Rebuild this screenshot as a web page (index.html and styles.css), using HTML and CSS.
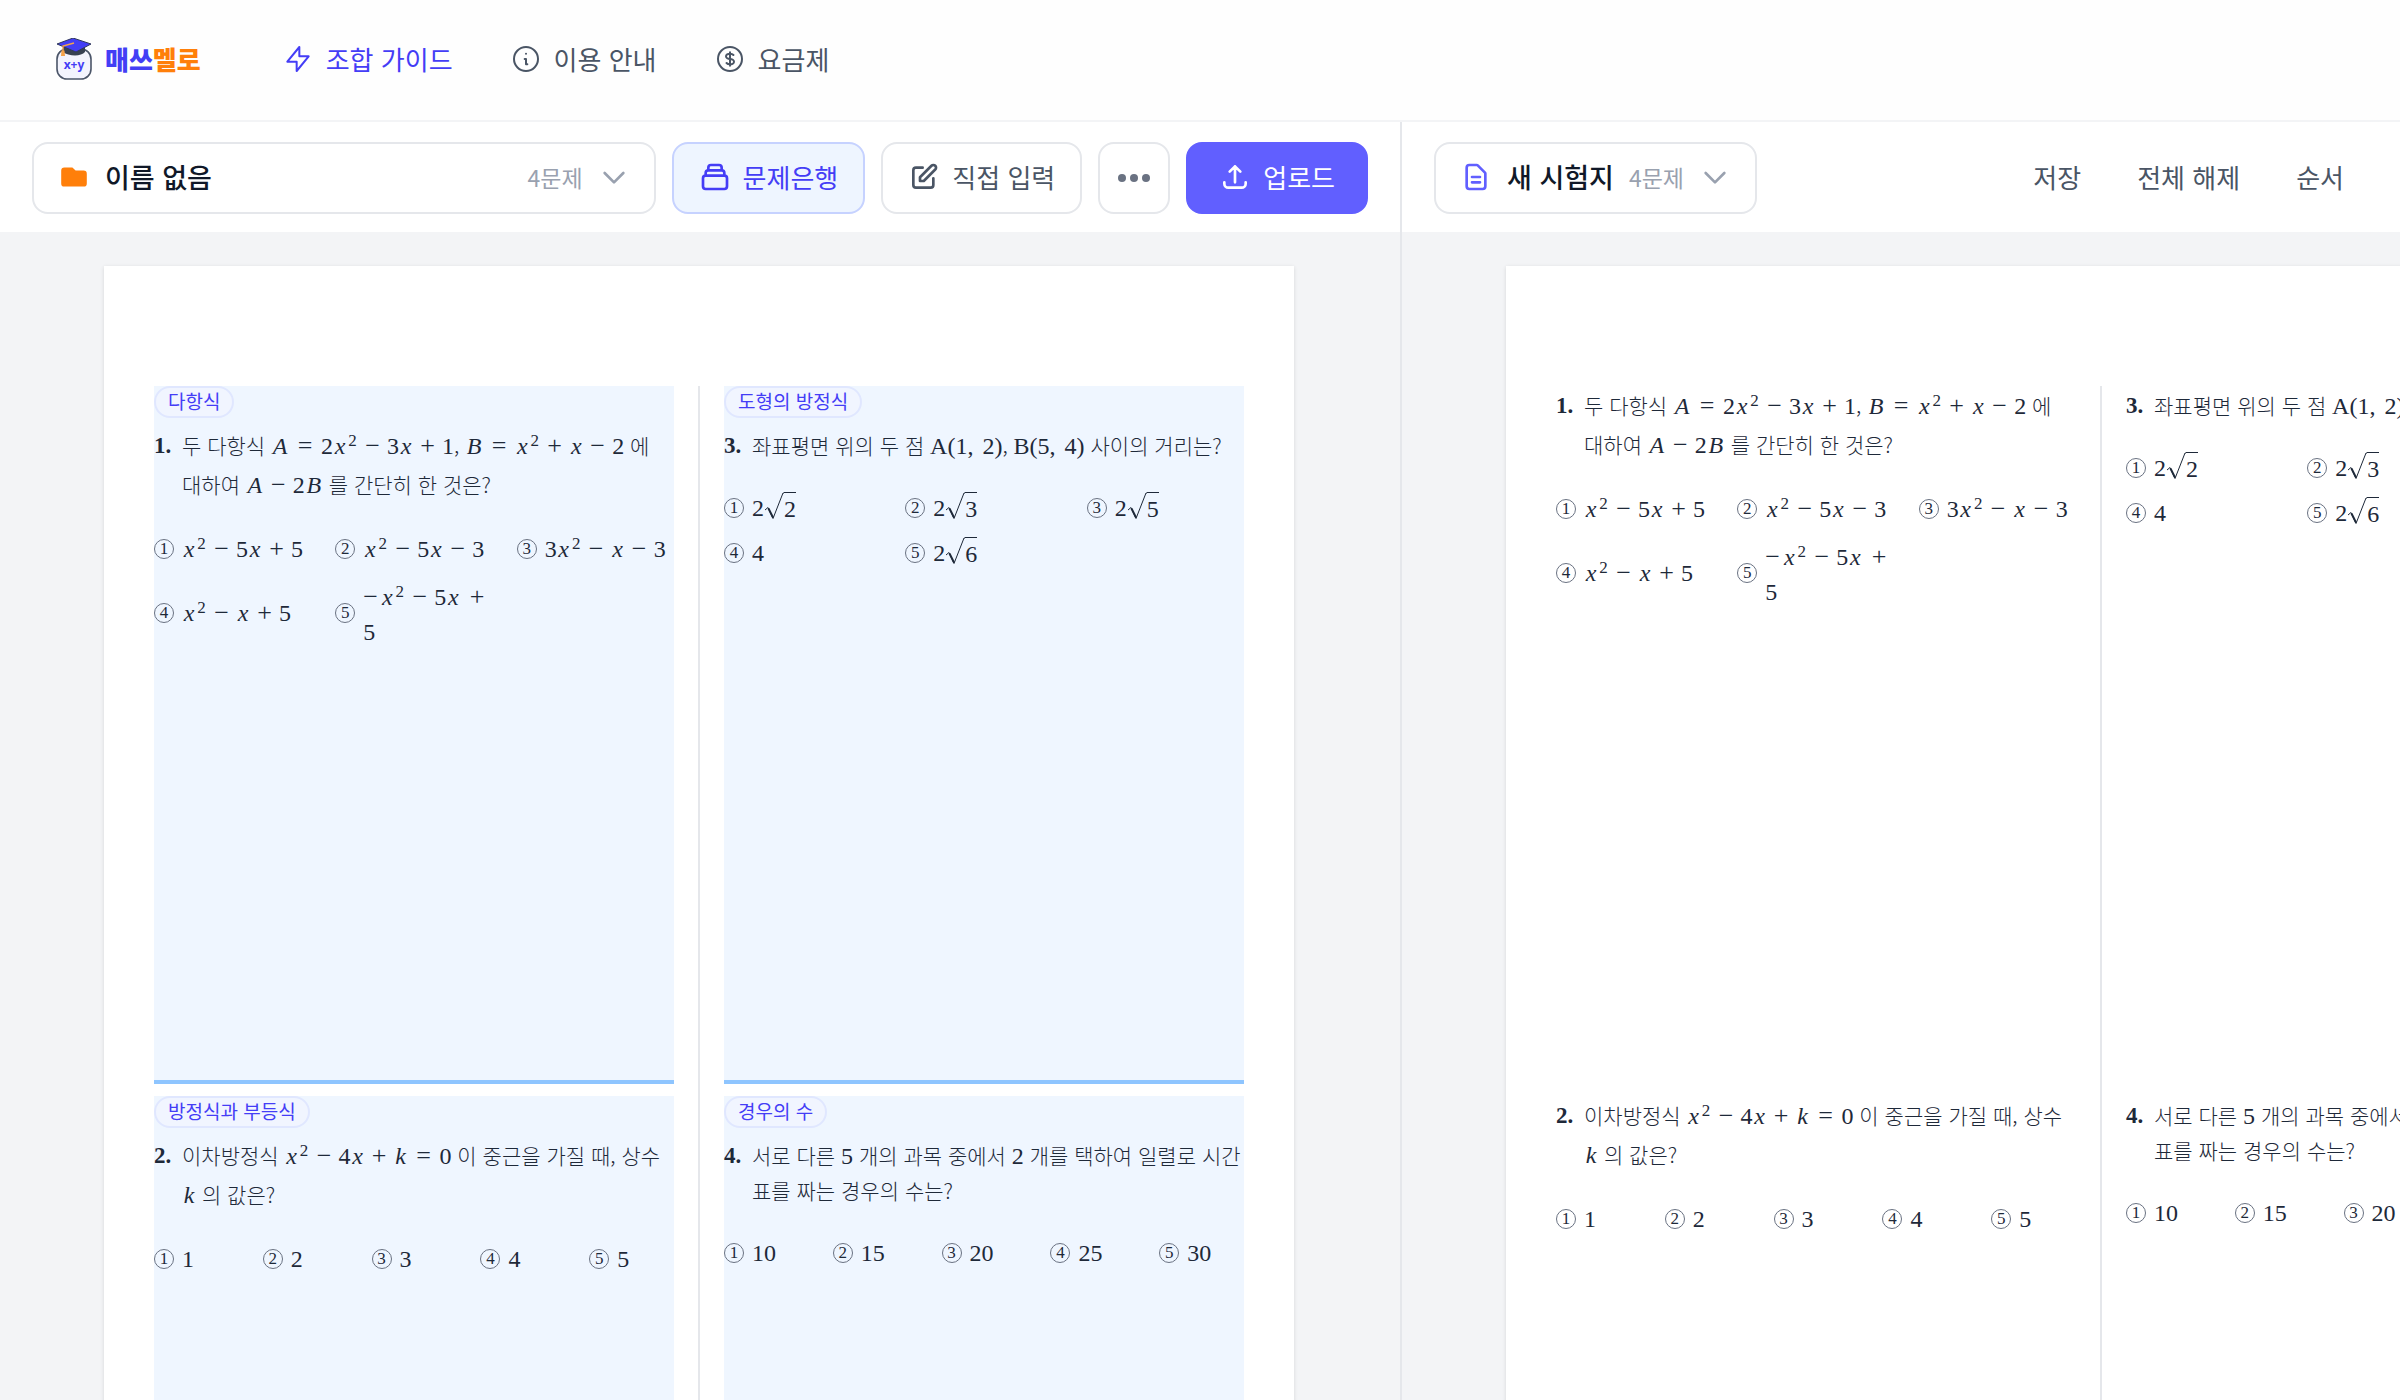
FILE: index.html
```html
<!DOCTYPE html>
<html lang="ko">
<head>
<meta charset="utf-8">
<title>매쓰멜로</title>
<link rel="stylesheet" href="styles.css">
</head>
<body>
<header class="site-header">
  <a class="brand" href="#">
    <svg class="brand-mark" viewBox="0 0 36 42" aria-hidden="true">
      <rect x="1" y="11" width="34" height="30" rx="10" fill="#f3f4fd" stroke="#4b5568" stroke-width="1.6"/>
      <path d="M7 8v6c5 4 18 5 22 0V8z" fill="#374151"/>
      <path d="M1 6 17 0l18 6-15 8z" fill="#433ef5" stroke="#30395c" stroke-width="1"/>
      <path d="m18 5-11 3v5" fill="none" stroke="#f5a34a" stroke-width="1.4"/>
      <path d="M5.500 12.500h3l.5 5.500h-4z" fill="#f5a34a"/>
      <text class="brand-formula" x="18" y="31" text-anchor="middle">x+y</text>
    </svg>
    <span class="brand-name">매쓰<span class="brand-accent">멜로</span></span>
  </a>
  <nav class="site-nav">
    <a class="nav-link nav-link--active" href="#">
      <svg class="icon icon--light" viewBox="0 0 24 24" aria-hidden="true"><path d="M13 10V3L4 14h7v7l9-11h-7z"/></svg>
      조합 가이드
    </a>
    <a class="nav-link" href="#">
      <svg class="icon icon--light" viewBox="0 0 24 24" aria-hidden="true"><path d="M13 16h-1v-4h-1m1-4h.01M21 12a9 9 0 11-18 0 9 9 0 0118 0z"/></svg>
      이용 안내
    </a>
    <a class="nav-link" href="#">
      <svg class="icon icon--light" viewBox="0 0 24 24" aria-hidden="true"><path d="M12 8c-1.657 0-3 .895-3 2s1.343 2 3 2 3 .895 3 2-1.343 2-3 2m0-8c1.110 0 2.080.402 2.599 1M12 8V7m0 1v8m0 0v1m0-1c-1.110 0-2.080-.402-2.599-1M21 12a9 9 0 11-18 0 9 9 0 0118 0z"/></svg>
      요금제
    </a>
  </nav>
</header>

<main class="workspace">
  <section class="pane">
    <div class="toolbar">
      <button class="btn picker picker--wide" type="button">
        <svg class="icon icon--folder" viewBox="0 0 20 20" aria-hidden="true"><path d="M2 6a2 2 0 012-2h5l2 2h5a2 2 0 012 2v6a2 2 0 01-2 2H4a2 2 0 01-2-2V6z"/></svg>
        <span class="picker-name">이름 없음</span>
        <span class="picker-count">4문제</span>
        <svg class="icon icon--chevron" viewBox="0 0 24 24" aria-hidden="true"><path d="M19 9l-7 7-7-7"/></svg>
      </button>
      <button class="btn btn--selected" type="button">
        <svg class="icon" viewBox="0 0 24 24" aria-hidden="true"><path d="M19 11H5m14 0a2 2 0 012 2v6a2 2 0 01-2 2H5a2 2 0 01-2-2v-6a2 2 0 012-2m14 0V9a2 2 0 00-2-2M5 11V9a2 2 0 012-2m0 0V5a2 2 0 012-2h6a2 2 0 012 2v2M7 7h10"/></svg>
        문제은행
      </button>
      <button class="btn" type="button">
        <svg class="icon" viewBox="0 0 24 24" aria-hidden="true"><path d="M11 5H6a2 2 0 00-2 2v11a2 2 0 002 2h11a2 2 0 002-2v-5m-1.414-9.414a2 2 0 112.828 2.828L11.828 15H9v-2.828l8.586-8.586z"/></svg>
        직접 입력
      </button>
      <button class="btn btn--more" type="button" aria-label="더보기">
        <svg class="dots" viewBox="0 0 32 8" aria-hidden="true"><circle cx="4" cy="4" r="4"/><circle cx="16" cy="4" r="4"/><circle cx="28" cy="4" r="4"/></svg>
      </button>
      <button class="btn btn--primary" type="button">
        <svg class="icon" viewBox="0 0 24 24" aria-hidden="true"><path d="M4 16v1a3 3 0 003 3h10a3 3 0 003-3v-1m-4-8l-4-4m0 0L8 8m4-4v12"/></svg>
        업로드
      </button>
    </div>
    <div class="desk">
      <div class="paper paper--bank">
        <div class="column">
          <article class="cell">
            <span class="tag">다항식</span>
            <div class="question question--formula"><b class="number">1.</b><p class="stem">두 다항식 <span class="math"><var class="cap">A</var><span class="rel">=</span>2<var>x</var><sup>2</sup><span class="bin">−</span>3<var>x</var><span class="bin">+</span>1</span>, <span class="math"><var class="cap">B</var><span class="rel">=</span><var>x</var><sup>2</sup><span class="bin">+</span><var>x</var><span class="bin">−</span>2</span> 에 대하여 <span class="math"><var class="cap">A</var><span class="bin">−</span>2<var class="cap">B</var></span> 를 간단히 한 것은?</p></div>
            <ol class="choices">
              <li><i class="mark">1</i><span class="math"><var>x</var><sup>2</sup><span class="bin">−</span>5<var>x</var><span class="bin">+</span>5</span></li>
              <li><i class="mark">2</i><span class="math"><var>x</var><sup>2</sup><span class="bin">−</span>5<var>x</var><span class="bin">−</span>3</span></li>
              <li><i class="mark">3</i><span class="math">3<var>x</var><sup>2</sup><span class="bin">−</span><var>x</var><span class="bin">−</span>3</span></li>
              <li><i class="mark">4</i><span class="math"><var>x</var><sup>2</sup><span class="bin">−</span><var>x</var><span class="bin">+</span>5</span></li>
              <li><i class="mark">5</i><span><span class="math"><span class="sign">−</span><var>x</var><sup>2</sup><span class="bin">−</span>5<var>x</var><span class="bin bin--end">+</span></span> <span class="math">5</span></span></li>
            </ol>
          </article>
          <article class="cell">
            <span class="tag">방정식과 부등식</span>
            <div class="question question--formula"><b class="number">2.</b><p class="stem">이차방정식 <span class="math"><var>x</var><sup>2</sup><span class="bin">−</span>4<var>x</var><span class="bin">+</span><var>k</var><span class="rel">=</span>0</span> 이 중근을 가질 때, 상수 <span class="math"><var>k</var></span> 의 값은?</p></div>
            <ol class="choices choices--five">
              <li><i class="mark">1</i><span class="math">1</span></li>
              <li><i class="mark">2</i><span class="math">2</span></li>
              <li><i class="mark">3</i><span class="math">3</span></li>
              <li><i class="mark">4</i><span class="math">4</span></li>
              <li><i class="mark">5</i><span class="math">5</span></li>
            </ol>
          </article>
        </div>
        <div class="rule"></div>
        <div class="column">
          <article class="cell">
            <span class="tag">도형의 방정식</span>
            <div class="question"><b class="number">3.</b><p class="stem">좌표평면 위의 두 점 <span class="math"><span class="point">A</span>(1,<span class="comma-gap"></span>2)</span>, <span class="math"><span class="point">B</span>(5,<span class="comma-gap"></span>4)</span> 사이의 거리는?</p></div>
            <ol class="choices">
              <li><i class="mark">1</i><span class="math">2<svg class="radical" viewBox="0 0 20 28" aria-hidden="true"><path d="m1 18 3-2.500 5 11L19 1h1"/><path class="radical-heavy" d="m4.500 16.500 4.500 9"/></svg><span class="radicand">2</span></span></li>
              <li><i class="mark">2</i><span class="math">2<svg class="radical" viewBox="0 0 20 28" aria-hidden="true"><path d="m1 18 3-2.500 5 11L19 1h1"/><path class="radical-heavy" d="m4.500 16.500 4.500 9"/></svg><span class="radicand">3</span></span></li>
              <li><i class="mark">3</i><span class="math">2<svg class="radical" viewBox="0 0 20 28" aria-hidden="true"><path d="m1 18 3-2.500 5 11L19 1h1"/><path class="radical-heavy" d="m4.500 16.500 4.500 9"/></svg><span class="radicand">5</span></span></li>
              <li><i class="mark">4</i><span class="math">4</span></li>
              <li><i class="mark">5</i><span class="math">2<svg class="radical" viewBox="0 0 20 28" aria-hidden="true"><path d="m1 18 3-2.500 5 11L19 1h1"/><path class="radical-heavy" d="m4.500 16.500 4.500 9"/></svg><span class="radicand">6</span></span></li>
            </ol>
          </article>
          <article class="cell">
            <span class="tag">경우의 수</span>
            <div class="question"><b class="number">4.</b><p class="stem">서로 다른 <span class="math">5</span> 개의 과목 중에서 <span class="math">2</span> 개를 택하여 일렬로 시간표를 짜는 경우의 수는?</p></div>
            <ol class="choices choices--five">
              <li><i class="mark">1</i><span class="math">10</span></li>
              <li><i class="mark">2</i><span class="math">15</span></li>
              <li><i class="mark">3</i><span class="math">20</span></li>
              <li><i class="mark">4</i><span class="math">25</span></li>
              <li><i class="mark">5</i><span class="math">30</span></li>
            </ol>
          </article>
        </div>
      </div>
    </div>
  </section>

  <section class="pane pane--exam">
    <div class="toolbar">
      <button class="btn picker" type="button">
        <svg class="icon icon--doc" viewBox="0 0 24 24" aria-hidden="true"><path d="M9 12h6m-6 4h6m2 5H7a2 2 0 01-2-2V5a2 2 0 012-2h5.586a1 1 0 01.707.293l5.414 5.414a1 1 0 01.293.707V19a2 2 0 01-2 2z"/></svg>
        <span class="picker-name">새 시험지</span>
        <span class="picker-count">4문제</span>
        <svg class="icon icon--chevron" viewBox="0 0 24 24" aria-hidden="true"><path d="M19 9l-7 7-7-7"/></svg>
      </button>
      <div class="actions">
        <button class="btn btn--text" type="button">저장</button>
        <button class="btn btn--text" type="button">전체 해제</button>
        <button class="btn btn--text" type="button">순서</button>
      </div>
    </div>
    <div class="desk">
      <div class="paper">
        <div class="column">
          <article class="cell">
            <div class="question question--formula"><b class="number">1.</b><p class="stem">두 다항식 <span class="math"><var class="cap">A</var><span class="rel">=</span>2<var>x</var><sup>2</sup><span class="bin">−</span>3<var>x</var><span class="bin">+</span>1</span>, <span class="math"><var class="cap">B</var><span class="rel">=</span><var>x</var><sup>2</sup><span class="bin">+</span><var>x</var><span class="bin">−</span>2</span> 에 대하여 <span class="math"><var class="cap">A</var><span class="bin">−</span>2<var class="cap">B</var></span> 를 간단히 한 것은?</p></div>
            <ol class="choices">
              <li><i class="mark">1</i><span class="math"><var>x</var><sup>2</sup><span class="bin">−</span>5<var>x</var><span class="bin">+</span>5</span></li>
              <li><i class="mark">2</i><span class="math"><var>x</var><sup>2</sup><span class="bin">−</span>5<var>x</var><span class="bin">−</span>3</span></li>
              <li><i class="mark">3</i><span class="math">3<var>x</var><sup>2</sup><span class="bin">−</span><var>x</var><span class="bin">−</span>3</span></li>
              <li><i class="mark">4</i><span class="math"><var>x</var><sup>2</sup><span class="bin">−</span><var>x</var><span class="bin">+</span>5</span></li>
              <li><i class="mark">5</i><span><span class="math"><span class="sign">−</span><var>x</var><sup>2</sup><span class="bin">−</span>5<var>x</var><span class="bin bin--end">+</span></span> <span class="math">5</span></span></li>
            </ol>
          </article>
          <article class="cell">
            <div class="question question--formula"><b class="number">2.</b><p class="stem">이차방정식 <span class="math"><var>x</var><sup>2</sup><span class="bin">−</span>4<var>x</var><span class="bin">+</span><var>k</var><span class="rel">=</span>0</span> 이 중근을 가질 때, 상수 <span class="math"><var>k</var></span> 의 값은?</p></div>
            <ol class="choices choices--five">
              <li><i class="mark">1</i><span class="math">1</span></li>
              <li><i class="mark">2</i><span class="math">2</span></li>
              <li><i class="mark">3</i><span class="math">3</span></li>
              <li><i class="mark">4</i><span class="math">4</span></li>
              <li><i class="mark">5</i><span class="math">5</span></li>
            </ol>
          </article>
        </div>
        <div class="rule"></div>
        <div class="column">
          <article class="cell">
            <div class="question"><b class="number">3.</b><p class="stem">좌표평면 위의 두 점 <span class="math"><span class="point">A</span>(1,<span class="comma-gap"></span>2)</span>, <span class="math"><span class="point">B</span>(5,<span class="comma-gap"></span>4)</span> 사이의 거리는?</p></div>
            <ol class="choices">
              <li><i class="mark">1</i><span class="math">2<svg class="radical" viewBox="0 0 20 28" aria-hidden="true"><path d="m1 18 3-2.500 5 11L19 1h1"/><path class="radical-heavy" d="m4.500 16.500 4.500 9"/></svg><span class="radicand">2</span></span></li>
              <li><i class="mark">2</i><span class="math">2<svg class="radical" viewBox="0 0 20 28" aria-hidden="true"><path d="m1 18 3-2.500 5 11L19 1h1"/><path class="radical-heavy" d="m4.500 16.500 4.500 9"/></svg><span class="radicand">3</span></span></li>
              <li><i class="mark">3</i><span class="math">2<svg class="radical" viewBox="0 0 20 28" aria-hidden="true"><path d="m1 18 3-2.500 5 11L19 1h1"/><path class="radical-heavy" d="m4.500 16.500 4.500 9"/></svg><span class="radicand">5</span></span></li>
              <li><i class="mark">4</i><span class="math">4</span></li>
              <li><i class="mark">5</i><span class="math">2<svg class="radical" viewBox="0 0 20 28" aria-hidden="true"><path d="m1 18 3-2.500 5 11L19 1h1"/><path class="radical-heavy" d="m4.500 16.500 4.500 9"/></svg><span class="radicand">6</span></span></li>
            </ol>
          </article>
          <article class="cell">
            <div class="question"><b class="number">4.</b><p class="stem">서로 다른 <span class="math">5</span> 개의 과목 중에서 <span class="math">2</span> 개를 택하여 일렬로 시간표를 짜는 경우의 수는?</p></div>
            <ol class="choices choices--five">
              <li><i class="mark">1</i><span class="math">10</span></li>
              <li><i class="mark">2</i><span class="math">15</span></li>
              <li><i class="mark">3</i><span class="math">20</span></li>
              <li><i class="mark">4</i><span class="math">25</span></li>
              <li><i class="mark">5</i><span class="math">30</span></li>
            </ol>
          </article>
        </div>
      </div>
    </div>
  </section>
</main>
</body>
</html>
```
FILE: styles.css
```css
* {
  box-sizing: border-box;
}

body {
  margin: 0;
  height: 100vh;
  display: flex;
  flex-direction: column;
  overflow: hidden;
  background: #fff;
  color: #1e2939;
  font-family: "Noto Sans CJK KR", sans-serif;
  font-size: 26px;
  line-height: 36px;
}

a {
  color: inherit;
  text-decoration: none;
}

/* Header */
.site-header {
  display: flex;
  align-items: center;
  gap: 81px;
  height: 122px;
  flex: none;
  padding: 0 56px 2px;
  background: #fefefe;
  border-bottom: 2px solid #f3f4f6;
}

.brand {
  display: flex;
  align-items: center;
  gap: 13px;
}

.brand-mark {
  width: 36px;
  height: 42px;
}

.brand-formula {
  font-family: "Noto Sans", sans-serif;
  font-size: 12px;
  font-weight: 700;
  fill: #433ef5;
}

.brand-name {
  font-weight: 900;
  color: #433ef5;
}

.brand-accent {
  color: #ff7f0a;
}

.site-nav {
  display: flex;
  gap: 57px;
}

.nav-link {
  display: flex;
  align-items: center;
  gap: 12px;
  color: #4a5565;
}

.nav-link--active {
  color: #443df6;
}

.icon {
  width: 32px;
  height: 32px;
  flex: none;
  fill: none;
  stroke: currentColor;
  stroke-width: 2;
  stroke-linecap: round;
  stroke-linejoin: round;
}

.icon--light {
  stroke-width: 1.5;
}

.icon--folder {
  fill: #ff7f0a;
  stroke: none;
}

.icon--doc {
  stroke: #615fff;
}

.icon--chevron {
  stroke: #99a1af;
}

/* Panes */
.workspace {
  flex: 1;
  min-height: 0;
  display: grid;
  grid-template-columns: minmax(0, 7fr) minmax(0, 5fr);
}

.pane {
  display: flex;
  flex-direction: column;
  min-height: 0;
}

.pane--exam {
  border-left: 2px solid #e5e7eb;
}

.toolbar {
  display: flex;
  align-items: center;
  gap: 16px;
  flex: none;
  padding: 20px 32px 18px;
}

.btn {
  display: flex;
  align-items: center;
  justify-content: center;
  gap: 12px;
  height: 72px;
  padding: 0 25px 2px;
  border: 2px solid #e5e7eb;
  border-radius: 16px;
  background: #fff;
  color: #4a5565;
  font: inherit;
  white-space: nowrap;
}

.btn--selected {
  background: #eef5ff;
  border-color: #c6d2ff;
  color: #443df6;
}

.btn--more {
  padding: 0 18px;
  color: #6a7282;
}

.btn--primary {
  padding: 0 31px 2px;
  background: #615fff;
  border-color: #615fff;
  color: #fff;
}

.btn--text {
  padding: 0 22px 2px;
  border-color: transparent;
}

.dots {
  width: 32px;
  height: 8px;
  fill: currentColor;
}

.picker {
  gap: 15px;
  padding: 0 24px 2px;
}

.picker--wide {
  flex: 1;
}

.picker--wide .picker-count {
  margin-left: auto;
}

.picker-name {
  color: #101828;
  font-size: 27px;
  font-weight: 500;
}

.picker-count {
  color: #99a1af;
  font-size: 23px;
}

.actions {
  display: flex;
  gap: 8px;
  margin-left: auto;
}

/* Papers */
.desk {
  flex: 1;
  min-height: 0;
  overflow: hidden;
  padding: 34px 104px;
  background: #f3f4f6;
}

.paper {
  display: flex;
  justify-content: space-between;
  width: 1190px;
  padding: 120px 50px;
  background: #fff;
  box-shadow: 0 1px 4px rgba(0, 0, 0, 0.12);
}

.rule {
  width: 2px;
  background: #e5e7eb;
}

.column {
  display: flex;
  flex-direction: column;
  gap: 12px;
  width: 520px;
}

.cell {
  min-height: 698px;
}

.paper--bank .cell {
  background: #eff6ff;
  border-bottom: 4px solid #8ec5ff;
}

.tag {
  display: block;
  width: fit-content;
  height: 32px;
  margin-bottom: 8px;
  padding: 0 12px;
  border: 2px solid #e0e7ff;
  border-radius: 16px;
  background: #f1f5ff;
  color: #443df6;
  font-size: 19px;
  line-height: 26px;
}

.question {
  display: flex;
  font-size: 21px;
  line-height: 35px;
  padding-top: 2px;
  word-break: break-all;
}

.question--formula {
  padding-top: 0;
  line-height: 39px;
}

.number {
  flex: none;
  width: 28px;
  font-family: "Liberation Serif", serif;
  font-size: 23px;
}

.stem {
  flex: 1;
  margin: 0;
  font-weight: 300;
}

/* Inline formulas */
.math {
  font-family: "Liberation Serif", serif;
  font-size: 24px;
  font-weight: 400;
  line-height: 32px;
  white-space: nowrap;
}

.math var {
  display: inline-block;
  width: 14px;
  line-height: 28px;
  text-align: center;
}

.math .cap {
  width: 18px;
}

.math sup {
  display: inline-block;
  width: 11px;
  font-size: 17px;
  line-height: 17px;
  text-align: center;
  vertical-align: 8px;
}

.bin,
.rel {
  display: inline-block;
  width: 29px;
  font-size: 26px;
  line-height: 26px;
  text-align: center;
}

.rel {
  width: 32px;
}

.sign {
  display: inline-block;
  width: 17px;
  font-size: 26px;
  line-height: 26px;
}

.bin--end {
  width: 24px;
  text-align: right;
}

.comma-gap {
  display: inline-block;
  width: 9px;
}

.radical {
  width: 20px;
  height: 28px;
  vertical-align: -4px;
  fill: none;
  stroke: currentColor;
}

.radical-heavy {
  stroke-width: 2;
}

.radicand {
  display: inline-block;
  height: 28px;
  border-top: 1px solid currentColor;
  line-height: 32px;
  vertical-align: top;
}

/* Answer choices */
.choices {
  display: grid;
  grid-template-columns: repeat(3, minmax(0, 1fr));
  gap: 13px 24px;
  margin: 29px 0 0;
  padding: 0;
  list-style: none;
  line-height: 32px;
}

.choices--five {
  grid-template-columns: repeat(5, minmax(0, 1fr));
}

.choices li {
  display: flex;
  align-items: center;
  gap: 8px;
}

.mark {
  flex: none;
  width: 20px;
  height: 20px;
  border: 1px solid #6a7282;
  border-radius: 50%;
  font-family: "Liberation Serif", serif;
  font-size: 17px;
  font-style: normal;
  line-height: 18px;
  text-align: center;
}
```
